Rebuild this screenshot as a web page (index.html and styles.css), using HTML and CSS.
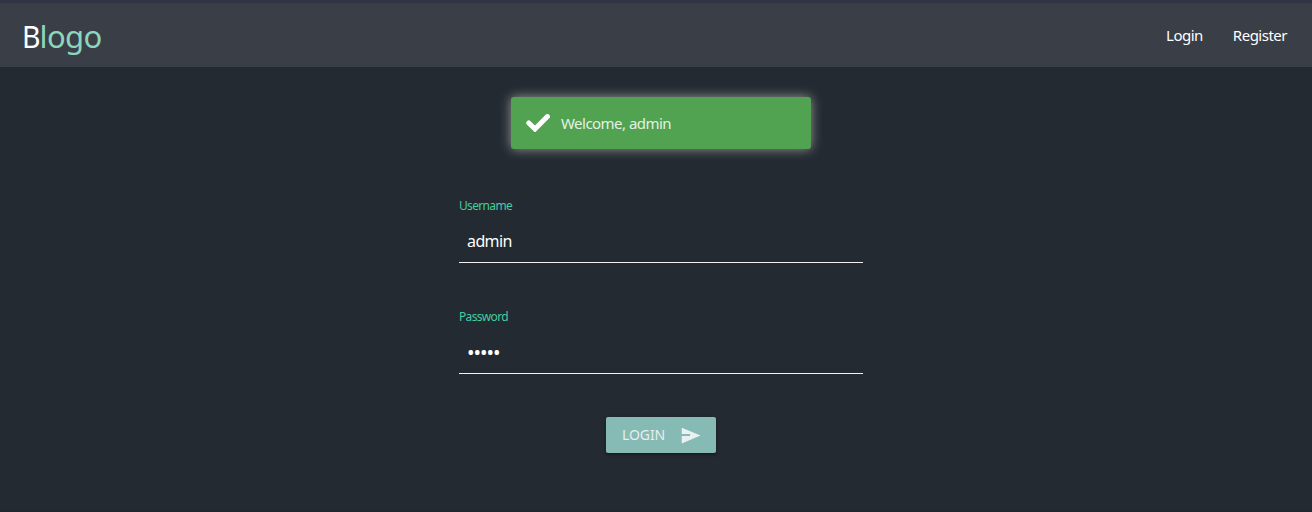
FILE: index.html
```html
<!DOCTYPE html>
<html lang="en">
<head>
<meta charset="utf-8">
<title>Blogo</title>
<link rel="stylesheet" href="styles.css">
</head>
<body>
<header class="navbar">
  <a class="brand"><span class="brand-initial">B</span>logo</a>
  <nav class="links"><a class="link login-link">Login</a><a class="link register-link">Register</a></nav>
</header>
<main class="content">
  <div class="toast">
    <svg class="check" viewBox="0 0 24 18"><path d="M2.8 9 9 15 21.4 2.6" fill="none" stroke="#fff" stroke-width="5" stroke-linecap="round"/></svg>
    <span class="toast-text">Welcome, admin</span>
  </div>
  <form class="form">
    <div class="field">
      <label class="label" for="user">Username</label>
      <input class="input" id="user" type="text" value="admin">
    </div>
    <div class="field">
      <label class="label" for="pass">Password</label>
      <input class="input password" id="pass" type="password" value="admin">
    </div>
    <button class="submit" type="button"><span class="submit-text">LOGIN</span>
      <svg class="send" viewBox="0 0 24 24"><path d="M2 21 23.5 12 2 3v7.2h9.5v2.4H2z" fill="#eaf1f0"/></svg>
    </button>
  </form>
</main>
</body>
</html>
```
FILE: styles.css
```css
* { box-sizing: border-box; }
body {
  margin: 0;
  height: 512px;
  overflow: hidden;
  background: #232a31;
  border-top: 3px solid #303443;
  border-bottom: 2px solid #24262f;
  font-family: "Noto Sans", "Open Sans", sans-serif;
  color: #fff;
}
.navbar {
  height: 64px;
  padding: 0 25px 0 22px;
  display: flex;
  justify-content: space-between;
  background: #3a3e46;
}
.brand {
  font-size: 31px;
  line-height: 67px;
  letter-spacing: -0.6px;
  color: #8dd6bd;
}
.brand-initial { display: inline-block; color: #fff; transform: scaleX(.92); transform-origin: left; margin-right: -2px; }
.links { display: flex; gap: 30px; }
.link { font-size: 15px; line-height: 64px; letter-spacing: -0.5px; }
.content { display: flex; flex-direction: column; align-items: center; padding: 30px 0 0 10px; }
.toast {
  width: 300px;
  height: 52px;
  padding-left: 15px;
  display: flex;
  align-items: center;
  gap: 11px;
  background: #51a351;
  border-radius: 3px;
  box-shadow: 0 0 12px #999;
}
.check { width: 24px; height: 18px; }
.toast-text { font-size: 15px; letter-spacing: -0.53px; color: #e4f1e4; }
.form { width: 404px; padding-top: 48px; display: flex; flex-direction: column; align-items: center; }
.field { width: 100%; height: 111px; display: flex; flex-direction: column; }
.label { align-self: flex-start; height: 20px; font-size: 12px; line-height: 18px; letter-spacing: -0.66px; color: #43cda0; }
.input {
  width: 100%;
  height: 46px;
  padding: 3px 8px 0;
  border: 0;
  border-bottom: 1px solid #f2f2f2;
  outline: 0;
  background: transparent;
  color: #fff;
  font: 16px "Noto Sans", sans-serif;
  letter-spacing: -0.6px;
}
.password { font-size: 20px; letter-spacing: -1px; }
.submit {
  width: 110px;
  height: 36px;
  margin-top: -2px;
  padding: 0 15px 0 16px;
  display: flex;
  align-items: center;
  justify-content: space-between;
  border: 0;
  border-radius: 2px;
  background: #86bab5;
  box-shadow: 0 2px 2px rgba(0,0,0,.14), 0 3px 1px -2px rgba(0,0,0,.12), 0 1px 5px rgba(0,0,0,.2);
  color: #e4efed;
  font: 14px "Noto Sans", sans-serif;
}
.submit-text { padding-bottom: 2px; letter-spacing: -0.1px; }
.send { width: 21px; height: 21px; }
```
